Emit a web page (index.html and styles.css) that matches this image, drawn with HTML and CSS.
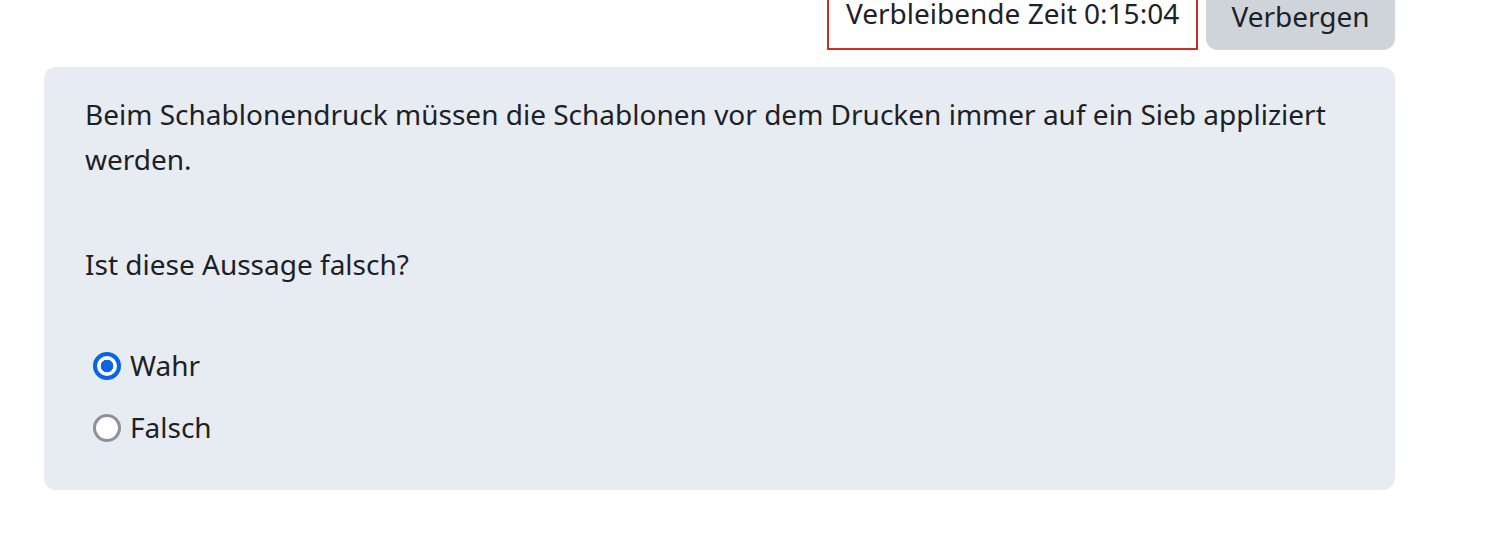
FILE: index.html
```html
<!DOCTYPE html>
<html lang="de">
<head>
<meta charset="utf-8">
<link rel="stylesheet" href="styles.css">
</head>
<body>
<div class="page">
  <div class="topbar">
    <div class="timer">Verbleibende Zeit 0:15:04</div>
    <button class="hide-btn" type="button">Verbergen</button>
  </div>
  <div class="card">
    <p class="qtext">Beim Schablonendruck müssen die Schablonen vor dem Drucken immer auf ein Sieb appliziert werden.</p>
    <p class="qtext prompt">Ist diese Aussage falsch?</p>
    <div class="answers">
      <label class="option"><span class="radio checked"></span><span class="label">Wahr</span></label>
      <label class="option"><span class="radio"></span><span class="label">Falsch</span></label>
    </div>
  </div>
</div>
</body>
</html>
```
FILE: styles.css
```css
html, body {
  margin: 0;
  padding: 0;
  background: #ffffff;
}
body {
  font-family: "Noto Sans", "Open Sans", sans-serif;
  color: #1d2125;
  font-size: 28px;
}
.page {
  width: 1351px;
  margin-left: 44px;
}
.topbar {
  display: flex;
  justify-content: flex-end;
  align-items: stretch;
  gap: 8px;
  height: 50px;
}
.timer {
  width: 371px;
  box-sizing: border-box;
  border: 2px solid #ca3120;
  border-top: none;
  padding: 0 0 0 17px;
  line-height: 26px;
  background: #fff;
}
.hide-btn {
  width: 189px;
  border: none;
  border-radius: 0 0 12px 12px;
  background: #ced4da;
  color: #1d2125;
  font-family: inherit;
  font-size: 28px;
  padding: 3px 0 0 0;
  line-height: 26px;
  display: flex;
  justify-content: center;
  align-items: flex-start;
}
.card {
  margin-top: 17px;
  background: #e7ecf3;
  border-radius: 12px;
  padding: 25px 40px 30px 41px;
  height: 423px;
  box-sizing: border-box;
}
.qtext {
  margin: 0;
  line-height: 45px;
}
.prompt {
  margin-top: 60px;
}
.answers {
  margin-top: 56px;
  display: flex;
  flex-direction: column;
  gap: 17px;
}
.option {
  display: flex;
  align-items: center;
  height: 45px;
  padding-left: 8px;
}
.radio {
  width: 28px;
  height: 28px;
  box-sizing: border-box;
  border-radius: 50%;
  border: 3px solid #8f8f9d;
  background: #fff;
  margin-right: 9px;
  flex: none;
}
.radio.checked {
  border: 4px solid #0b63e5;
  background: radial-gradient(circle, #0b63e5 0 6px, #fff 6.6px);
}
.label {
  line-height: 45px;
}
```
